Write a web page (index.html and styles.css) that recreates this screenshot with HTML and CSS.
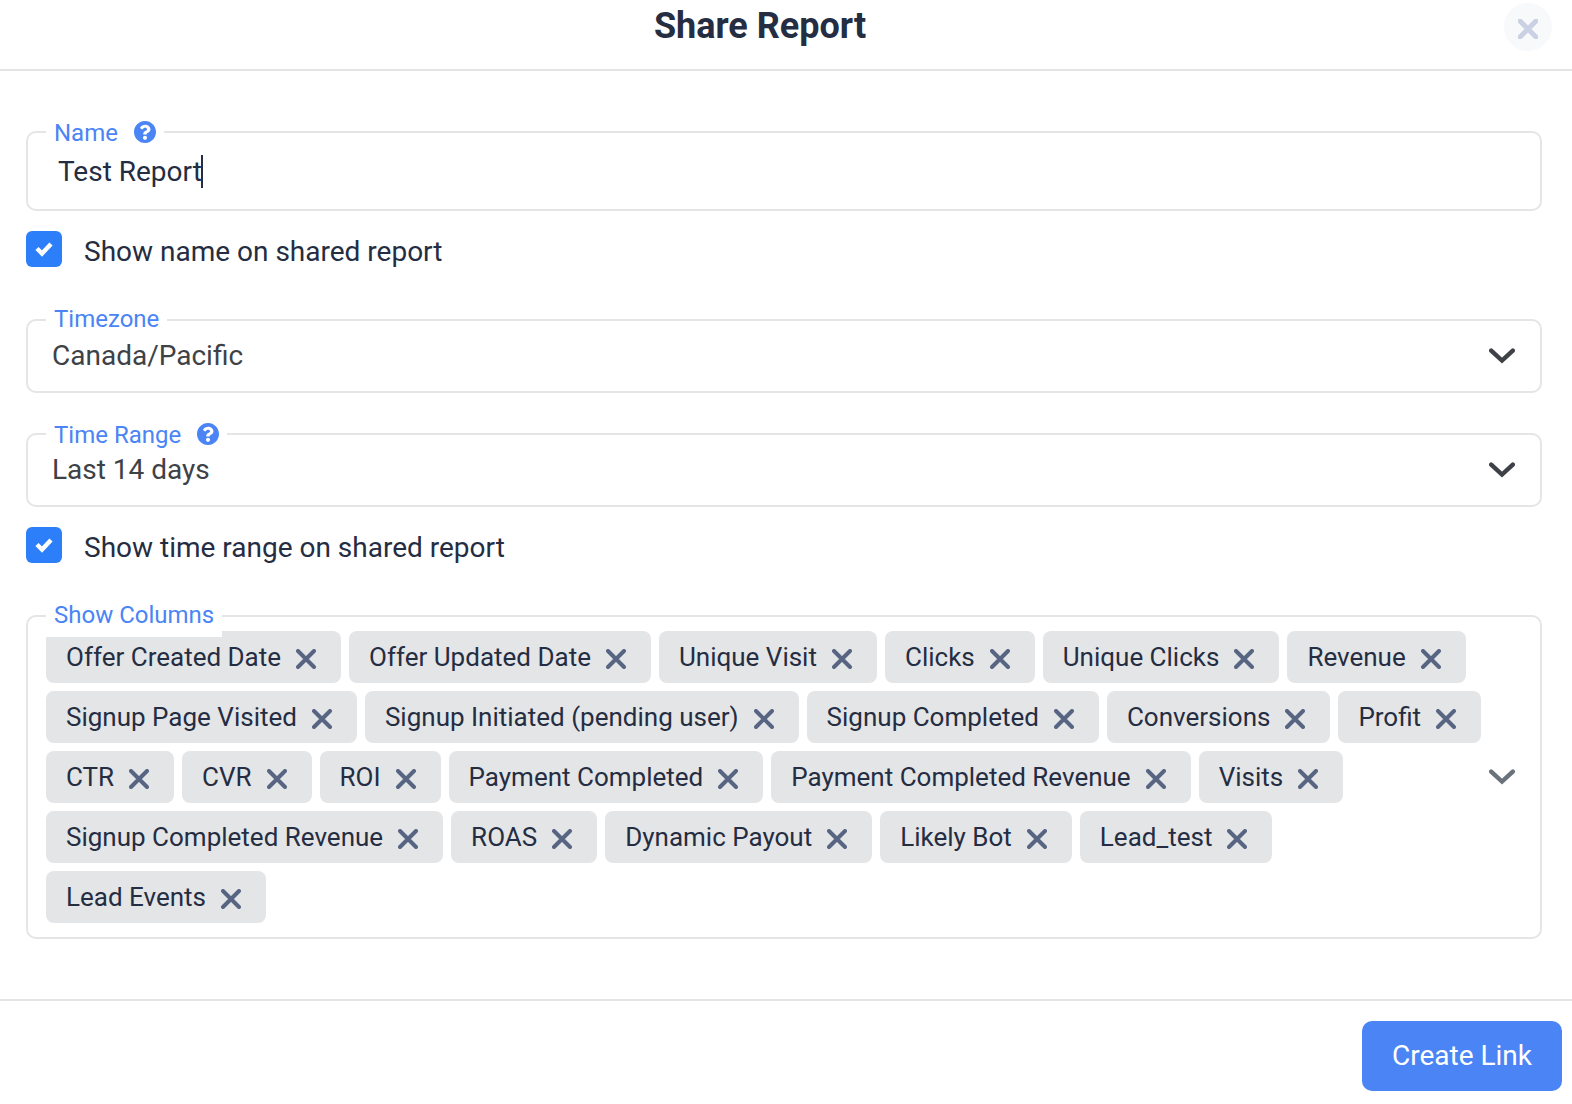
FILE: index.html
```html
<!DOCTYPE html>
<html lang="en">
<head>
    <meta charset="UTF-8">
    <meta name="viewport" content="width=device-width, initial-scale=1.0">
    <title>Share Report</title>
    <link rel="stylesheet" href="styles.css">
</head>
<body>
    <svg class="sprite" aria-hidden="true">
        <symbol id="icon-x" viewBox="0 0 20 20">
            <path d="M2 2L18 18M18 2L2 18" fill="none" stroke="currentColor" stroke-linecap="round"/>
        </symbol>
        <symbol id="icon-chevron" viewBox="0 0 26 16">
            <path d="M2.200 2.600L13 12.600L23.800 2.600" fill="none" stroke="currentColor" stroke-width="4.400" stroke-linecap="round" stroke-linejoin="miter"/>
        </symbol>
        <symbol id="icon-help" viewBox="8 8 496 496">
            <path fill="currentColor" d="M504 256c0 137-111 248-248 248S8 393 8 256 119 8 256 8s248 111 248 248zM262.700 90c-54.500 0-89.300 23-116.500 63.800-3.500 5.300-2.400 12.400 2.700 16.300l34.700 26.300c5.200 3.900 12.600 3 16.700-2.100 17.900-22.700 30.100-35.800 57.300-35.800 20.400 0 45.700 13.100 45.700 33 0 15-12.400 22.700-32.500 34C247.100 238.500 216 254.900 216 296v4c0 6.600 5.400 12 12 12h56c6.600 0 12-5.400 12-12v-1.300c0-28.500 83.200-29.600 83.200-106.700 0-58-60.200-102-116.500-102zM256 338c-25.400 0-46 20.600-46 46s20.600 46 46 46 46-20.600 46-46-20.600-46-46-46z"/>
        </symbol>
    </svg>

    <div class="modal">
        <header class="modal-header">
            <h1>Share Report</h1>
            <button type="button" class="close-btn" aria-label="Close"><svg class="icon-x"><use href="#icon-x"/></svg></button>
        </header>

        <form class="share-form" id="share-form">
            <div class="field field-name">
                <label class="field-label with-help" for="name">Name <svg class="icon-help"><use href="#icon-help"/></svg></label>
                <input type="text" id="name" value="Test Report" autocomplete="off" spellcheck="false">
                <span class="caret"></span>
            </div>
            <label class="check">
                <input type="checkbox" checked>
                <svg class="check-mark" viewBox="0 0 18 16"><path d="M2 7.500L7 12.500L16 3" fill="none" stroke="currentColor" stroke-width="4.400"/></svg>
                <span>Show name on shared report</span>
            </label>

            <div class="field field-select field-timezone">
                <label class="field-label" for="timezone">Timezone</label>
                <select id="timezone">
                    <option>Canada/Pacific</option>
                </select>
                <svg class="chevron"><use href="#icon-chevron"/></svg>
            </div>

            <div class="field field-select">
                <label class="field-label with-help" for="range">Time Range <svg class="icon-help"><use href="#icon-help"/></svg></label>
                <select id="range">
                    <option>Last 14 days</option>
                </select>
                <svg class="chevron"><use href="#icon-chevron"/></svg>
            </div>
            <label class="check">
                <input type="checkbox" checked>
                <svg class="check-mark" viewBox="0 0 18 16"><path d="M2 7.500L7 12.500L16 3" fill="none" stroke="currentColor" stroke-width="4.400"/></svg>
                <span>Show time range on shared report</span>
            </label>

            <div class="field field-columns" role="group" aria-labelledby="columns-label">
                <span class="field-label label-tall" id="columns-label">Show Columns</span>
                <ul class="chips">
                    <li>Offer Created Date <button type="button" aria-label="Remove Offer Created Date"><svg class="icon-x"><use href="#icon-x"/></svg></button></li>
                    <li>Offer Updated Date <button type="button" aria-label="Remove Offer Updated Date"><svg class="icon-x"><use href="#icon-x"/></svg></button></li>
                    <li>Unique Visit <button type="button" aria-label="Remove Unique Visit"><svg class="icon-x"><use href="#icon-x"/></svg></button></li>
                    <li>Clicks <button type="button" aria-label="Remove Clicks"><svg class="icon-x"><use href="#icon-x"/></svg></button></li>
                    <li>Unique Clicks <button type="button" aria-label="Remove Unique Clicks"><svg class="icon-x"><use href="#icon-x"/></svg></button></li>
                    <li>Revenue <button type="button" aria-label="Remove Revenue"><svg class="icon-x"><use href="#icon-x"/></svg></button></li>
                    <li>Signup Page Visited <button type="button" aria-label="Remove Signup Page Visited"><svg class="icon-x"><use href="#icon-x"/></svg></button></li>
                    <li>Signup Initiated (pending user) <button type="button" aria-label="Remove Signup Initiated"><svg class="icon-x"><use href="#icon-x"/></svg></button></li>
                    <li>Signup Completed <button type="button" aria-label="Remove Signup Completed"><svg class="icon-x"><use href="#icon-x"/></svg></button></li>
                    <li>Conversions <button type="button" aria-label="Remove Conversions"><svg class="icon-x"><use href="#icon-x"/></svg></button></li>
                    <li>Profit <button type="button" aria-label="Remove Profit"><svg class="icon-x"><use href="#icon-x"/></svg></button></li>
                    <li>CTR <button type="button" aria-label="Remove CTR"><svg class="icon-x"><use href="#icon-x"/></svg></button></li>
                    <li>CVR <button type="button" aria-label="Remove CVR"><svg class="icon-x"><use href="#icon-x"/></svg></button></li>
                    <li>ROI <button type="button" aria-label="Remove ROI"><svg class="icon-x"><use href="#icon-x"/></svg></button></li>
                    <li>Payment Completed <button type="button" aria-label="Remove Payment Completed"><svg class="icon-x"><use href="#icon-x"/></svg></button></li>
                    <li>Payment Completed Revenue <button type="button" aria-label="Remove Payment Completed Revenue"><svg class="icon-x"><use href="#icon-x"/></svg></button></li>
                    <li>Visits <button type="button" aria-label="Remove Visits"><svg class="icon-x"><use href="#icon-x"/></svg></button></li>
                    <li>Signup Completed Revenue <button type="button" aria-label="Remove Signup Completed Revenue"><svg class="icon-x"><use href="#icon-x"/></svg></button></li>
                    <li>ROAS <button type="button" aria-label="Remove ROAS"><svg class="icon-x"><use href="#icon-x"/></svg></button></li>
                    <li>Dynamic Payout <button type="button" aria-label="Remove Dynamic Payout"><svg class="icon-x"><use href="#icon-x"/></svg></button></li>
                    <li>Likely Bot <button type="button" aria-label="Remove Likely Bot"><svg class="icon-x"><use href="#icon-x"/></svg></button></li>
                    <li>Lead_test <button type="button" aria-label="Remove Lead_test"><svg class="icon-x"><use href="#icon-x"/></svg></button></li>
                    <li>Lead Events <button type="button" aria-label="Remove Lead Events"><svg class="icon-x"><use href="#icon-x"/></svg></button></li>
                </ul>
                <button type="button" class="columns-toggle" aria-label="Open columns list"><svg><use href="#icon-chevron"/></svg></button>
            </div>
        </form>

        <footer class="modal-footer">
            <button type="submit" form="share-form" class="create-btn">Create Link</button>
        </footer>
    </div>
</body>
</html>
```
FILE: styles.css
```css
* {
    box-sizing: border-box;
}
body {
    font-family: Roboto, sans-serif;
    font-size: 28px;
    line-height: 36px;
    color: #252d42;
    background-color: #fff;
    margin: 0;
}
button,
input,
select {
    font: inherit;
    color: inherit;
}
button {
    border: none;
    padding: 0;
    cursor: pointer;
}
.sprite {
    position: absolute;
    width: 0;
    height: 0;
}

/* header */
.modal-header {
    display: flex;
    align-items: flex-start;
    padding: 3px 20px 18px 16px;
    border-bottom: 2px solid #e4e4e4;
}
.modal-header h1 {
    flex: 1;
    margin: 0;
    font-size: 36px;
    line-height: 46px;
    font-weight: 700;
    text-align: center;
}
.close-btn {
    display: flex;
    align-items: center;
    justify-content: center;
    width: 48px;
    height: 48px;
    padding-top: 4px;
    border-radius: 50%;
    background-color: #f8f9fb;
    color: #cbd1e4;
}
.icon-x {
    display: block;
    width: 20px;
    height: 20px;
    stroke-width: 4px;
}
.close-btn .icon-x {
    stroke-width: 5px;
}

/* fields */
.share-form {
    padding: 60px 30px 60px 26px;
}
.field {
    position: relative;
    display: flex;
    align-items: center;
    border: 2px solid #e4e5e6;
    border-radius: 10px;
}
.field-label {
    position: absolute;
    top: -18px;
    left: 18px;
    display: flex;
    align-items: center;
    gap: 16px;
    padding: 0 8px;
    background-color: #fff;
    color: #4a84f5;
    font-size: 24px;
    line-height: 32px;
}
.with-help {
    top: -16px;
}
.label-tall {
    top: -24px;
    line-height: 44px;
}
.icon-help {
    width: 22px;
    height: 22px;
    margin-bottom: 2px;
}
.field input,
.field select {
    width: 100%;
    border: none;
    outline: none;
    background: none;
    appearance: none;
}
.field input {
    height: 76px;
    padding: 0 30px;
}
.field select {
    height: 70px;
    padding: 0 80px 0 24px;
    color: #3e4247;
}
.caret {
    position: absolute;
    top: 22px;
    left: 173px;
    width: 2px;
    height: 33px;
    background-color: #252d42;
}
.chevron {
    position: absolute;
    right: 25px;
    width: 26px;
    height: 16px;
    color: #3e4247;
    pointer-events: none;
}
.field-timezone {
    margin-bottom: 40px;
}

/* checkboxes */
.check {
    position: relative;
    display: flex;
    align-items: center;
    gap: 22px;
    height: 36px;
    margin: 20px 0 52px;
}
.check input {
    width: 36px;
    height: 36px;
    margin: 0;
    border-radius: 6px;
    background-color: #2d7ff9;
    appearance: none;
}
.check span {
    padding-top: 6px;
}
.check-mark {
    position: absolute;
    left: 9px;
    width: 18px;
    height: 16px;
    color: #fff;
}

/* selected columns */
.field-columns {
    padding: 14px 25px 14px 18px;
}
.chips {
    flex: 1;
    display: flex;
    flex-wrap: wrap;
    gap: 8px;
    margin: 0;
    padding: 0;
    list-style: none;
}
.chips li {
    display: flex;
    align-items: center;
    gap: 15px;
    padding: 0 25px 0 20px;
    border-radius: 8px;
    background-color: #e4e5e7;
    font-size: 26px;
    line-height: 52px;
}
.chips button {
    margin-top: 4px;
    background: none;
    color: #586582;
}
.columns-toggle {
    display: flex;
    background: none;
    color: #6a737b;
}
.columns-toggle svg {
    width: 26px;
    height: 16px;
}

/* footer */
.modal-footer {
    display: flex;
    justify-content: flex-end;
    padding: 20px 10px 13px;
    border-top: 2px solid #e4e4e4;
}
.create-btn {
    padding: 17px 30px;
    border-radius: 10px;
    background-color: #4a84f5;
    color: #fff;
}
```
